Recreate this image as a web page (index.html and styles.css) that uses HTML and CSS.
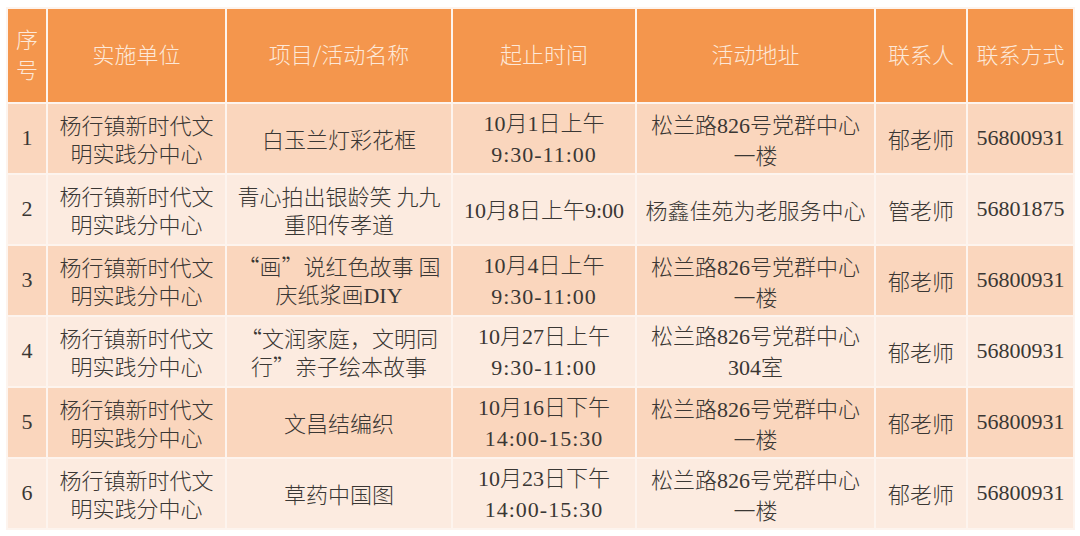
FILE: index.html
```html
<!DOCTYPE html>
<html lang="zh-CN">
<head>
<meta charset="utf-8">
<title>活动安排</title>
<link rel="stylesheet" href="styles.css">
</head>
<body>
<div class="wrap">
<table class="sched">
  <colgroup>
    <col class="c1"><col class="c2"><col class="c3"><col class="c4"><col class="c5"><col class="c6"><col class="c7">
  </colgroup>
  <thead>
    <tr class="head">
      <th class="hno">序<br>号</th>
      <th>实施单位</th>
      <th>项目/活动名称</th>
      <th>起止时间</th>
      <th>活动地址</th>
      <th>联系人</th>
      <th>联系方式</th>
    </tr>
  </thead>
  <tbody>
    <tr class="odd">
      <td class="n">1</td>
      <td>杨行镇新时代文<br>明实践分中心</td>
      <td>白玉兰灯彩花框</td>
      <td><span class="n">10</span>月<span class="n">1</span>日上午<br><span class="n t">9:30-11:00</span></td>
      <td>松兰路<span class="n">826</span>号党群中心<br>一楼</td>
      <td>郁老师</td>
      <td class="n">56800931</td>
    </tr>
    <tr class="even">
      <td class="n">2</td>
      <td>杨行镇新时代文<br>明实践分中心</td>
      <td>青心拍出银龄笑 九九<br>重阳传孝道</td>
      <td class="nw"><span class="n">10</span>月<span class="n">8</span>日上午<span class="n">9:00</span></td>
      <td>杨鑫佳苑为老服务中心</td>
      <td>管老师</td>
      <td class="n">56801875</td>
    </tr>
    <tr class="odd">
      <td class="n">3</td>
      <td>杨行镇新时代文<br>明实践分中心</td>
      <td>“画”说红色故事 国<br>庆纸浆画<span class="n">DIY</span></td>
      <td><span class="n">10</span>月<span class="n">4</span>日上午<br><span class="n t">9:30-11:00</span></td>
      <td>松兰路<span class="n">826</span>号党群中心<br>一楼</td>
      <td>郁老师</td>
      <td class="n">56800931</td>
    </tr>
    <tr class="even">
      <td class="n">4</td>
      <td>杨行镇新时代文<br>明实践分中心</td>
      <td>“文润家庭，文明同<br>行”亲子绘本故事</td>
      <td><span class="n">10</span>月<span class="n">27</span>日上午<br><span class="n t">9:30-11:00</span></td>
      <td>松兰路<span class="n">826</span>号党群中心<br><span class="n">304</span>室</td>
      <td>郁老师</td>
      <td class="n">56800931</td>
    </tr>
    <tr class="odd">
      <td class="n">5</td>
      <td>杨行镇新时代文<br>明实践分中心</td>
      <td>文昌结编织</td>
      <td><span class="n">10</span>月<span class="n">16</span>日下午<br><span class="n t">14:00-15:30</span></td>
      <td>松兰路<span class="n">826</span>号党群中心<br>一楼</td>
      <td>郁老师</td>
      <td class="n">56800931</td>
    </tr>
    <tr class="even">
      <td class="n">6</td>
      <td>杨行镇新时代文<br>明实践分中心</td>
      <td>草药中国图</td>
      <td><span class="n">10</span>月<span class="n">23</span>日下午<br><span class="n t">14:00-15:30</span></td>
      <td>松兰路<span class="n">826</span>号党群中心<br>一楼</td>
      <td>郁老师</td>
      <td class="n">56800931</td>
    </tr>
  </tbody>
</table>
</div>
</body>
</html>
```
FILE: styles.css
```css
html, body {
  margin: 0;
  padding: 0;
  background: #ffffff;
}

.wrap {
  padding: 7px 0 0 6px;
}

.sched {
  width: 1067px;
  table-layout: fixed;
  border-collapse: collapse;
  font-family: "Noto Sans CJK SC", sans-serif;
  font-size: 22px;
  font-weight: 300;
  line-height: 28px;
  color: #3a3734;
}

.c1 { width: 40px; }
.c2 { width: 179px; }
.c3 { width: 226px; }
.c4 { width: 184px; }
.c5 { width: 239px; }
.c6 { width: 92px; }
.c7 { width: 107px; }

.sched th,
.sched td {
  border: 2px solid #fdf4ee;
  text-align: center;
  vertical-align: middle;
  overflow: hidden;
}

.sched th {
  padding: 0 2px 5px;
  background: #f4964d;
  color: #fde8d8;
  font-weight: 300;
}

.head {
  height: 95px;
}

.sched th.hno {
  line-height: 30px;
}

.sched td {
  padding: 0 2px 1px;
}

.odd,
.even {
  height: 71px;
}

.odd td {
  background: #fad6bd;
}

.even td {
  background: #fcebe0;
}

.n {
  font-family: "Liberation Serif", serif;
  font-weight: 400;
}

.t {
  letter-spacing: 1px;
}

.nw {
  white-space: nowrap;
}
```
